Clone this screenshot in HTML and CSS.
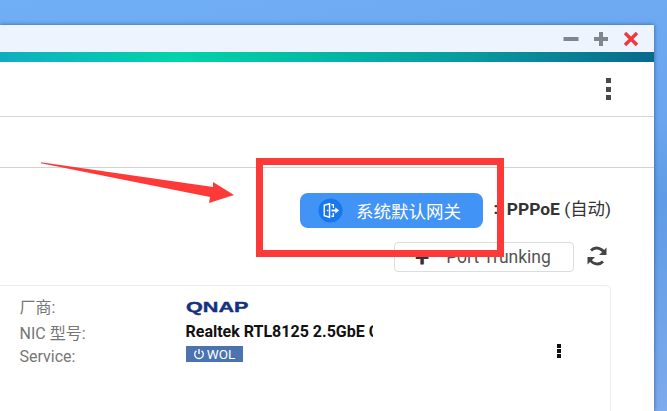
FILE: index.html
```html
<!DOCTYPE html>
<html lang="zh-CN">
<head>
<meta charset="utf-8">
<title>网络</title>
<link rel="stylesheet" href="styles.css">
</head>
<body>
<div class="window">
  <div class="titlebar">
    <svg class="win-icon" width="18" height="18" viewBox="0 0 18 18"><rect x="1.500" y="7" width="15" height="4" fill="#7d8790"/></svg>
    <svg class="win-icon" width="18" height="18" viewBox="0 0 18 18"><path d="M7 2h4v5h5v4h-5v5H7v-5H2V7h5z" fill="#7d8790"/></svg>
    <svg class="win-icon" width="18" height="18" viewBox="0 0 18 18"><path d="M3 3l12 12M15 3L3 15" stroke="#f0393c" stroke-width="3.400"/></svg>
  </div>
  <div class="accent"></div>
  <div class="toolbar">
    <div class="dots-large"><i></i><i></i><i></i></div>
  </div>
  <div class="tabs"></div>
  <div class="content">
    <div class="status-row">
      <div class="badge">
        <span class="badge-icon">
          <svg width="25" height="25" viewBox="0 0 26 26"><circle cx="13" cy="13" r="12.500" fill="#1677ee"/><path d="M6.500 7.500l5.500-1.500v14l-5.500-1.500z" fill="none" stroke="#fff" stroke-width="1.500"/><circle cx="10" cy="13" r="0.900" fill="#fff"/><path d="M14 7h2v3.500M14 19h2v-3.500" fill="none" stroke="#fff" stroke-width="1.400"/><path d="M14 13h5" stroke="#fff" stroke-width="2"/><path d="M18 10l4 3-4 3z" fill="#fff"/></svg>
        </span>
        <span class="badge-label">系统默认网关</span>
      </div>
      <span class="colon">:</span>
      <span class="status-value"><b>PPPoE</b> (自动)</span>
    </div>
    <div class="action-row">
      <div class="trunk-btn"><span class="plus">+</span><span>Port Trunking</span></div>
      <svg class="refresh" width="22" height="22" viewBox="0 0 22 22"><path d="M18.500 9A8 8 0 0 0 5 5.500M3.500 13A8 8 0 0 0 17 16.500" fill="none" stroke="#444" stroke-width="2.800"/><path d="M20.500 2.500v7.500h-7.500zM1.500 19.500v-7.500h7.500z" fill="#444"/></svg>
    </div>
    <div class="card">
      <div class="info">
        <span class="info-label">厂商:</span>
        <span class="logo">QNAP</span>
        <span class="info-label">NIC 型号:</span>
        <span class="model">Realtek RTL8125 2.5GbE Controller</span>
        <span class="info-label">Service:</span>
        <span class="tag">
          <svg width="12" height="12" viewBox="0 0 12 12"><path d="M3.400 2.800a4.300 4.300 0 1 0 5.200 0" fill="none" stroke="#fff" stroke-width="1.300"/><path d="M6 1v5" stroke="#fff" stroke-width="1.400"/></svg>WOL
        </span>
      </div>
      <div class="dots-small"><i></i><i></i><i></i></div>
    </div>
  </div>
</div>
<div class="highlight"></div>
<svg class="arrow" width="667" height="411" viewBox="0 0 667 411"><path d="M41 162.300L213 187 213 182 234 195 209 203 210 197 41 163.300z" fill="#fd3a38"/></svg>
</body>
</html>
```
FILE: styles.css
```css
html, body {
  margin: 0;
  padding: 0;
  height: 100%;
}
body {
  width: 667px;
  height: 411px;
  overflow: hidden;
  position: relative;
  background: linear-gradient(170deg, #70aef5 0%, #6aa5ee 45%, #5f9be6 60%, #7dabec 100%);
  font-family: Roboto, "Noto Sans CJK SC", sans-serif;
  padding-top: 25px;
  box-sizing: border-box;
}
.window {
  width: 654px;
  height: 386px;
  background: #fff;
  box-shadow: 0 0 4px rgba(30, 60, 110, 0.7);
  overflow: hidden;
}
.titlebar {
  height: 27px;
  background: #edf4fe;
  display: flex;
  justify-content: flex-end;
  align-items: center;
  gap: 12px;
  padding-right: 14px;
  box-sizing: border-box;
}
.win-icon {
  display: block;
}
.accent {
  height: 10px;
  background: linear-gradient(90deg, #10aec0 0%, #00d4aa 27%, #00c5a5 40%, #079a9e 72%, #076a8c 100%);
}
.toolbar {
  height: 55px;
  box-sizing: border-box;
  border-bottom: 1px solid #d6d6d6;
  display: flex;
  justify-content: flex-end;
  align-items: center;
  padding-right: 43px;
}
.dots-large {
  display: flex;
  flex-direction: column;
  gap: 3.500px;
}
.dots-large i {
  display: block;
  width: 5px;
  height: 5px;
  background: #4a4a4a;
}
.tabs {
  height: 51px;
  box-sizing: border-box;
  border-bottom: 1px solid #d2d2d2;
}
.content {
  display: flex;
  flex-direction: column;
  padding-right: 43px;
}
.status-row {
  display: flex;
  justify-content: flex-end;
  align-items: center;
  margin-top: 25px;
  height: 35px;
  color: #333;
}
.badge {
  width: 183px;
  height: 35px;
  background: #4293f6;
  border-radius: 8px;
  display: flex;
  align-items: center;
  box-sizing: border-box;
  padding-left: 18px;
  color: #fff;
}
.badge-icon {
  display: flex;
  margin-right: 12.500px;
}
.badge-label {
  font-size: 17.500px;
  letter-spacing: 0;
}
.colon {
  font-size: 17px;
  font-weight: 700;
  margin-left: 10px;
  margin-right: 8.500px;
  margin-bottom: 6px;
}
.status-value {
  font-size: 17.400px;
  white-space: nowrap;
  margin-bottom: 6px;
}
.status-value b {
  font-weight: 700;
}
.action-row {
  display: flex;
  justify-content: flex-end;
  align-items: center;
  margin-top: 14px;
  height: 30px;
}
.trunk-btn {
  width: 180px;
  height: 30px;
  box-sizing: border-box;
  border: 1px solid #dcdcdc;
  border-radius: 4px;
  display: flex;
  align-items: center;
  padding-left: 20px;
  font-size: 17.500px;
  color: #555;
  gap: 17px;
}
.plus {
  font-size: 26px;
  line-height: 26px;
  font-weight: 700;
  color: #333;
}
.refresh {
  margin-left: 12px;
  margin-right: 3px;
  margin-bottom: 2px;
}
.card {
  margin-top: 13px;
  margin-left: -6px;
  height: 140px;
  border: 1.500px solid #e9ebf3;
  border-radius: 5px;
  display: flex;
  align-items: flex-start;
  box-sizing: border-box;
  padding: 7.500px 0 0 24.500px;
}
.info {
  display: grid;
  grid-template-columns: 166px 187.500px;
  grid-template-rows: 24px 28px 21px;
  align-items: center;
  font-size: 16px;
}
.info-label {
  color: #767676;
}
.logo {
  font-family: "Liberation Sans", sans-serif;
  font-size: 15px;
  font-weight: 700;
  color: #14317f;
  -webkit-text-stroke: 0.400px #14317f;
  line-height: 12px;
  margin-top: 3px;
  transform: scaleX(1.440);
  transform-origin: left center;
}
.model {
  font-weight: 700;
  color: #111;
  white-space: nowrap;
  overflow: hidden;
}
.tag {
  width: 57px;
  height: 16px;
  align-self: start;
  background: #4a73b0;
  color: #fff;
  font-size: 13.500px;
  display: flex;
  align-items: center;
  justify-content: center;
  gap: 2px;
}
.dots-small {
  margin-left: 184px;
  margin-top: 50px;
  display: flex;
  flex-direction: column;
  gap: 1px;
}
.dots-small i {
  display: block;
  width: 4px;
  height: 4px;
  background: #111;
}
.highlight {
  position: absolute;
  left: 256px;
  top: 158px;
  width: 248px;
  height: 99px;
  box-sizing: border-box;
  border: 7.500px solid #fd3a38;
}
.arrow {
  position: absolute;
  left: 0;
  top: 0;
  pointer-events: none;
}
```
